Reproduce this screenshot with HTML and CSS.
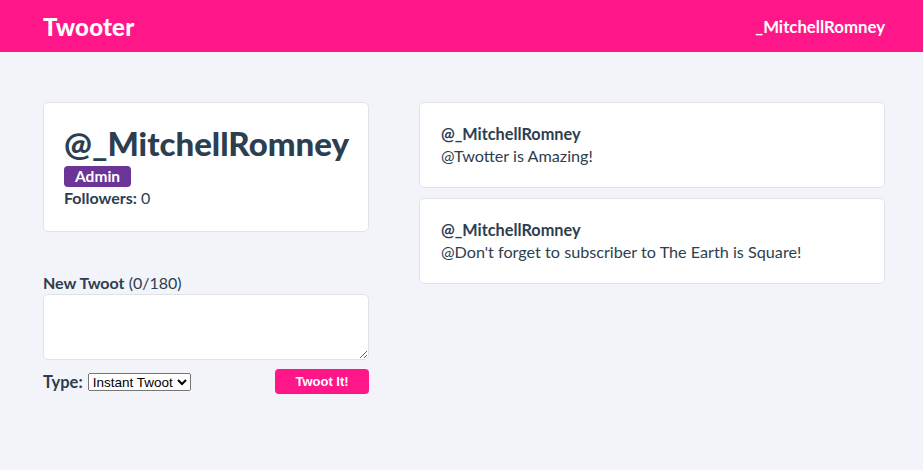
FILE: index.html
```html
<!DOCTYPE html>
<html>
<head>
<meta charset="utf-8">
<link rel="stylesheet" href="styles.css">
</head>
<body>
<header class="nav">
  <div class="brand">Twooter</div>
  <div class="user">_MitchellRomney</div>
</header>
<main class="wrap">
  <section class="left">
    <div class="card profile">
      <h1 class="handle">@_MitchellRomney</h1>
      <span class="badge">Admin</span>
      <div class="followers"><strong>Followers:</strong> 0</div>
    </div>
    <form class="compose">
      <label class="label"><strong>New Twoot</strong> (0/180)</label>
      <textarea class="area"></textarea>
      <div class="row">
        <div class="type"><strong>Type:</strong>
          <select class="sel"><option>Instant Twoot</option></select>
        </div>
        <button type="button" class="btn">Twoot It!</button>
      </div>
    </form>
  </section>
  <section class="right">
    <div class="card twoot">
      <div class="author">@_MitchellRomney</div>
      <div class="text">@Twotter is Amazing!</div>
    </div>
    <div class="card twoot">
      <div class="author">@_MitchellRomney</div>
      <div class="text">@Don't forget to subscriber to The Earth is Square!</div>
    </div>
  </section>
</main>
</body>
</html>
```

FILE: styles.css
```css
* { box-sizing: border-box; }
html, body { margin: 0; }
body {
  background: #f3f4f9;
  font-family: Lato, "Noto Sans", sans-serif;
  color: #2c3e50;
  height: 470px;
}
.nav {
  background: #ff1688;
  height: 52px;
  display: flex;
  align-items: center;
  justify-content: space-between;
  padding: 0 38px 0 43px;
  color: #fff;
}
.brand { font-weight: 900; font-size: 24px; letter-spacing: 0.2px; }
.user { font-weight: 700; font-size: 16.8px; }
.wrap {
  display: flex;
  gap: 50px;
  padding: 50px 38px 0 43px;
}
.left { width: 326px; flex: none; }
.right { flex: 1; display: flex; flex-direction: column; gap: 10px; }
.card {
  background: #fff;
  border: 1px solid #dfe3e8;
  border-radius: 5px;
}
.profile { height: 130px; padding: 20px 20px 0; }
.handle {
  margin: 0;
  font-size: 33px;
  font-weight: 900;
  line-height: 40px;
}
.badge {
  display: inline-block;
  margin-top: 3px;
  background: #6a3596;
  color: #fff;
  font-weight: 700;
  font-size: 15.5px;
  line-height: 21px;
  padding: 0 11px;
  border-radius: 4px;
}
.followers { font-size: 16px; margin-top: 1px; }
.compose { margin-top: 40px; display: flex; flex-direction: column; }
.label { font-size: 16px; line-height: 22px; }
.area {
  margin-top: 0;
  width: 326px;
  height: 66px;
  border: 1px solid #dfe3e8;
  border-radius: 5px;
  background: #fff;
  resize: vertical;
}
.row {
  display: flex;
  justify-content: space-between;
  align-items: center;
  margin-top: 9px;
}
.type { font-size: 16.5px; display: flex; align-items: center; gap: 5px; }
.sel { font-family: "Liberation Sans", Arial, sans-serif; font-size: 13.5px; height: 18px; }
.btn {
  background: #ff1688;
  color: #fff;
  border: none;
  border-radius: 4px;
  width: 94px;
  height: 25px;
  font-family: "Liberation Sans", Arial, sans-serif;
  font-weight: 700;
  font-size: 13px;
}
.twoot { height: 86px; padding: 20px 21px 0; }
.author { font-weight: 700; font-size: 16.3px; line-height: 21px; }
.text { font-size: 16.2px; line-height: 24px; }
```
